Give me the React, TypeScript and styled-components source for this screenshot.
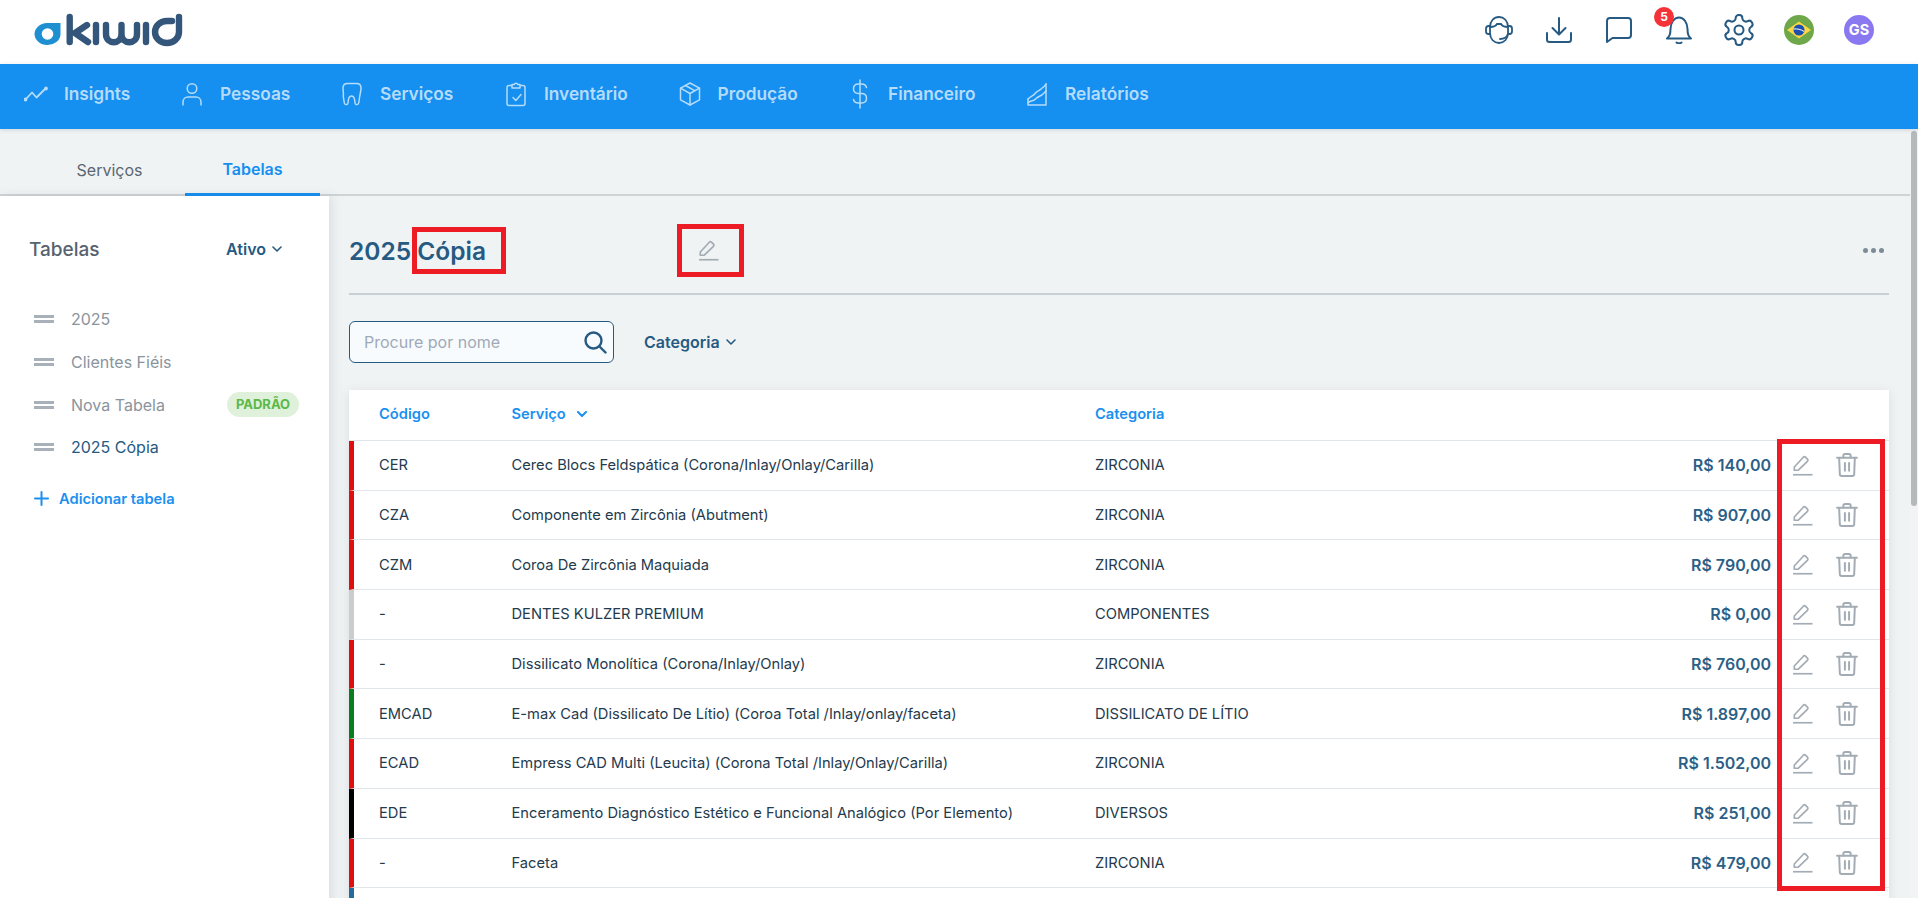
import React from "react";
import styled, { createGlobalStyle } from "styled-components";

const Global = createGlobalStyle`
  html, body { margin: 0; padding: 0; height: 100%; overflow: hidden; }
  body { font-family: Inter, "Noto Sans", sans-serif; background: #f0f3f4; }
  * { box-sizing: border-box; }
  svg { flex: none; display: block; }
`;

const Shell = styled.div`
  height: 898px;
  display: flex;
  flex-direction: column;
  position: relative;
  overflow: hidden;
`;

const TopBar = styled.header`
  height: 64px;
  flex: none;
  background: #fff;
  display: flex;
  align-items: center;
  justify-content: space-between;
  padding: 0 44px 0 34px;
`;

const Logo = styled.svg`
  width: 150px;
  height: 32px;
  margin-top: -4px;
  display: block;
  overflow: visible;
`;

const TopIcons = styled.div`
  display: flex;
  align-items: center;
  gap: 30px;
  margin-top: -4px;
`;

const TopIconBox = styled.div`
  width: 30px;
  height: 30px;
  position: relative;
  display: flex;
  align-items: center;
  justify-content: center;
  color: #265a82;
`;

const Badge = styled.span`
  position: absolute;
  left: -10px;
  top: -8px;
  width: 20px;
  height: 20px;
  border-radius: 50%;
  background: #f53238;
  color: #fff;
  font: 700 12px/20px Inter, sans-serif;
  text-align: center;
`;

const Avatar = styled.div`
  width: 30px;
  height: 30px;
  border-radius: 50%;
  background: #8a78f0;
  color: #fff;
  font: 700 14.5px/30px Inter, sans-serif;
  text-align: center;
`;

const NavBar = styled.nav`
  height: 65px;
  flex: none;
  background: #158ff0;
  display: flex;
  align-items: center;
  padding: 0 0 6px 24px;
  box-shadow: 0 1px 4px rgba(60, 80, 100, 0.18);
  position: relative;
  z-index: 2;
`;

const NavItem = styled.div<{ $w: number }>`
  display: flex;
  align-items: center;
  width: ${(p) => p.$w}px;
  color: #b5dcfb;
  font-size: 17.3px;
  font-weight: 600;
  white-space: nowrap;
`;

const NavIcon = styled.span`
  width: 24px;
  height: 24px;
  margin-right: 16px;
  display: flex;
  align-items: center;
  justify-content: center;
  flex: none;
`;

const Content = styled.div`
  flex: 1;
  min-height: 0;
  display: flex;
`;

const Scroller = styled.div`
  flex: 1;
  min-width: 0;
  overflow: hidden;
`;

const Rail = styled.div`
  width: 8px;
  flex: none;
  padding: 2px 1px 0;
  background: #f1f3f4;
`;

const Thumb = styled.div`
  height: 375px;
  border-radius: 3px;
  background: #b4b9bb;
`;

const TabsRow = styled.div`
  height: 67px;
  display: flex;
  gap: 8px;
  padding-left: 42px;
  border-bottom: 2px solid #ced3d6;
`;

const Tab = styled.div<{ $active?: boolean }>`
  width: 135px;
  height: 67px;
  display: flex;
  align-items: center;
  justify-content: center;
  padding-top: ${(p) => (p.$active ? 15 : 14)}px;
  font-size: 16px;
  font-weight: ${(p) => (p.$active ? 600 : 400)};
  color: ${(p) => (p.$active ? "#158ff0" : "#5b6670")};
  border-bottom: ${(p) => (p.$active ? "3px solid #158ff0" : "none")};
  flex: none;
`;

const Columns = styled.div`
  display: flex;
  align-items: stretch;
`;

const Sidebar = styled.aside`
  width: 329px;
  flex: none;
  min-height: 800px;
  background: #fff;
  box-shadow: 3px 0 10px rgba(60, 80, 90, 0.12);
  padding: 35px 30px 0 34px;
`;

const SideHead = styled.div`
  display: flex;
  align-items: center;
  justify-content: space-between;
  margin-left: -5px;
  height: 36px;
  padding-right: 17px;
`;

const SideTitle = styled.div`
  font-size: 19px;
  font-weight: 500;
  color: #56636f;
`;

const Dropdown = styled.div`
  display: flex;
  align-items: center;
  gap: 6px;
  font-size: 16px;
  font-weight: 600;
  color: #265a82;
`;

const TableList = styled.div`
  margin-top: 31px;
  display: flex;
  flex-direction: column;
`;

const TableRow = styled.div<{ $active?: boolean }>`
  height: 42.7px;
  display: flex;
  align-items: center;
  font-size: 16px;
  color: ${(p) => (p.$active ? "#265a82" : "#8a949c")};
`;

const Grip = styled.span`
  width: 20px;
  height: 8px;
  margin: 0 17px 0 0;
  border-top: 3px solid #a8b1b9;
  border-bottom: 3px solid #a8b1b9;
  flex: none;
`;

const Pill = styled.span`
  margin-left: auto;
  width: 72px;
  height: 25px;
  border-radius: 13px;
  background: #dff1da;
  color: #5bb84a;
  font-size: 13px;
  font-weight: 700;
  line-height: 25px;
  text-align: center;
`;

const AddLink = styled.div`
  display: flex;
  align-items: center;
  gap: 10px;
  margin-top: 21px;
  font-size: 14.7px;
  font-weight: 600;
  color: #1a90f0;
`;

const Main = styled.main`
  flex: 1;
  min-width: 0;
  padding: 0 21px 0 20px;
`;

const TitleRow = styled.div`
  height: 99px;
  display: flex;
  align-items: center;
  border-bottom: 2px solid #c8d0d6;
  padding-top: 12px;
`;

const Title = styled.h1`
  margin: 0;
  width: 349px;
  font-size: 24.5px;
  font-weight: 600;
  color: #265a82;
`;

const TitleEdit = styled.span`
  color: #a3acb4;
  display: flex;
`;

const Dots = styled.div`
  margin-left: auto;
  display: flex;
  gap: 3px;
  margin-right: 5px;
`;

const Dot = styled.span`
  width: 5px;
  height: 5px;
  border-radius: 50%;
  background: #7d8b96;
`;

const Filters = styled.div`
  margin-top: 26px;
  display: flex;
  align-items: center;
  gap: 30px;
`;

const SearchBox = styled.div`
  width: 265px;
  height: 42px;
  border: 1px solid #265a82;
  border-radius: 6px;
  background: #f7fbfd;
  display: flex;
  align-items: center;
  justify-content: space-between;
  padding: 0 6px 0 14px;
  font-size: 16px;
  color: #a0a9b8;
`;

const Card = styled.section`
  margin-top: 27px;
  background: #fff;
  box-shadow: 0 2px 10px rgba(60, 80, 90, 0.12);
`;

const cols = "132.5px 583.5px 1fr 130px 118px";

const HeadRow = styled.div`
  display: grid;
  grid-template-columns: ${cols};
  height: 51px;
  align-items: center;
  padding: 0 0 3px 30px;
  font-size: 14.7px;
  font-weight: 600;
  color: #1a90f0;
  border-bottom: 1px solid #e0e6ea;
`;

const SortLabel = styled.span`
  display: flex;
  align-items: center;
  gap: 11px;
`;

const Row = styled.div<{ $bar: string }>`
  display: grid;
  grid-template-columns: ${cols};
  height: 49.7px;
  align-items: center;
  padding: 0 0 0 25px;
  border-left: 5px solid ${(p) => p.$bar};
  border-bottom: 1px solid #e0e6ea;
  font-size: 14.7px;
  color: #243a4d;
`;

const Price = styled.div`
  text-align: right;
  font-size: 16px;
  font-weight: 600;
  color: #2b5f87;
  white-space: nowrap;
`;

const Actions = styled.div`
  display: flex;
  align-items: center;
  padding-left: 21px;
  gap: 23px;
  color: #a3acb4;
`;

const Mark = styled.div<{ $x: number; $y: number; $w: number; $h: number }>`
  position: absolute;
  left: ${(p) => p.$x}px;
  top: ${(p) => p.$y}px;
  width: ${(p) => p.$w}px;
  height: ${(p) => p.$h}px;
  border: 5px solid #ed1c24;
  pointer-events: none;
  z-index: 5;
`;

const EditIcon = () => (
  <svg width="21" height="21" viewBox="0 0 20 20" fill="none" stroke="currentColor" strokeWidth="1.6" strokeLinejoin="round">
    <path d="M2.2 14.5V11.4L10.8 2.1c.6-.6 1.4-.6 2 0l1.9 1.9c.6.6.6 1.4 0 2L6 14.5H2.2Z" />
    <path d="M1 18.8h18.5" />
  </svg>
);

const TrashIcon = () => (
  <svg width="22" height="24" viewBox="0 0 21 23" fill="none" stroke="currentColor" strokeWidth="1.9" strokeLinecap="round" strokeLinejoin="round">
    <path d="M1 4.6h19" />
    <path d="M7 4.4V2.6C7 1.6 7.6 1 8.6 1h3.8c1 0 1.6.6 1.6 1.6v1.8" />
    <path d="M3 4.8l.6 15.4c0 1 .8 1.8 1.8 1.8h10.2c1 0 1.8-.8 1.8-1.8L18 4.8" />
    <path d="M8.5 9.5v7.5M12.5 9.5v7.5" />
  </svg>
);

const Chevron = ({ w = 10, sw = 1.6 }: { w?: number; sw?: number }) => (
  <svg width={w} height={w * 0.6} viewBox="0 0 10 6" fill="none" stroke="currentColor" strokeWidth={sw} strokeLinecap="round" strokeLinejoin="round">
    <path d="M1 1l4 4 4-4" />
  </svg>
);

const navStroke = { fill: "none", stroke: "#b5dcfb", strokeWidth: 1.5, strokeLinecap: "round" as const, strokeLinejoin: "round" as const };

const navItems: { label: string; w: number; icon: React.ReactNode }[] = [
  { label: "Insights", w: 156, icon: (
    <svg width="24" height="16" viewBox="0 0 24 16" {...navStroke} strokeWidth={1.8}>
      <path d="M1.5 13.5L8 6.5l4.5 5L21.5 2.5" />
      <circle cx="1.5" cy="13.5" r="1" fill="#b5dcfb" /><circle cx="22" cy="2.5" r="1" fill="#b5dcfb" />
    </svg>) },
  { label: "Pessoas", w: 160, icon: (
    <svg width="22" height="24" viewBox="0 0 22 24" {...navStroke}>
      <circle cx="11" cy="6.5" r="4.8" />
      <path d="M2 23v-3c0-3 2.4-5 5-5h8c2.6 0 5 2 5 5v3" />
    </svg>) },
  { label: "Serviços", w: 164, icon: (
    <svg width="20" height="24" viewBox="0 0 20 24" {...navStroke}>
      <path d="M5.500 1.500h9c2.800 0 4.500 2 4.500 4.500 0 3-.8 5.500-1.300 8.500l-1 6.500c-.3 1.800-3 2.200-3.500.5-.4-1.500-.4-3.500-.9-5-.4-1.300-1.400-2.400-2.800-2.400s-2.400 1.100-2.800 2.400c-.5 1.500-.5 3.500-.9 5-.5 1.700-3.200 1.300-3.500-.5l-1-6.500C1.800 11.500 1 9 1 6c0-2.500 1.700-4.500 4.500-4.500Z" />
    </svg>) },
  { label: "Inventário", w: 173.5, icon: (
    <svg width="20" height="26" viewBox="0 0 20 26" {...navStroke}>
      <path d="M5.5 4.5H3C1.8 4.5 1 5.3 1 6.5v16c0 1.2.8 2 2 2h14c1.2 0 2-.8 2-2v-16c0-1.2-.8-2-2-2h-2.5" />
      <path d="M6 3.5h2.2a1.9 1.9 0 0 1 3.6 0H14v3.5H6V3.5Z" />
      <path d="M7 16.5l2.8 3 5.2-6" />
    </svg>) },
  { label: "Produção", w: 170.5, icon: (
    <svg width="22" height="24" viewBox="0 0 22 24" {...navStroke}>
      <path d="M11 1l9.5 5.2v11.6L11 23 1.500 17.800V6.200L11 1Z" />
      <path d="M1.500 6.200L11 11.500l9.500-5.300M11 11.500V23M6.500 3.500l9.500 5.300" />
    </svg>) },
  { label: "Financeiro", w: 177, icon: (
    <svg width="16" height="30" viewBox="0 0 16 30" {...navStroke}>
      <path d="M8 1v28M14.500 8.500C14 6.300 12 5 9.500 5h-3C3.500 5 1.500 7 1.500 9.800s2 4.700 5 4.700h3c3 0 5 2 5 4.800S12.500 24 9.500 24h-3c-2.500 0-4.500-1.300-5-3.500" />
    </svg>) },
  { label: "Relatórios", w: 140, icon: (
    <svg width="20" height="24" viewBox="0 0 20 24" {...navStroke}>
      <path d="M1 17v6h18V2" />
      <path d="M1 17c3-3.500 5-2.500 7-5.500 2-2.500 4-2.500 6-4.500 2-1.500 4-3 5-5" />
      <path d="M1 20.500c4-2.500 6-1 8-4 2-2 5-2.500 7-4.500 1-1 2-2 3-3" />
    </svg>) },
];

const rows: [string, string, string, string, string][] = [
  ["#e10e0e", "CER", "Cerec Blocs Feldspática (Corona/Inlay/Onlay/Carilla)", "ZIRCONIA", "R$ 140,00"],
  ["#e10e0e", "CZA", "Componente em Zircônia (Abutment)", "ZIRCONIA", "R$ 907,00"],
  ["#e10e0e", "CZM", "Coroa De Zircônia Maquiada", "ZIRCONIA", "R$ 790,00"],
  ["#cccccc", "-", "DENTES KULZER PREMIUM", "COMPONENTES", "R$ 0,00"],
  ["#e10e0e", "-", "Dissilicato Monolítica (Corona/Inlay/Onlay)", "ZIRCONIA", "R$ 760,00"],
  ["#0a7d1e", "EMCAD", "E-max Cad (Dissilicato De Lítio) (Coroa Total /Inlay/onlay/faceta)", "DISSILICATO DE LÍTIO", "R$ 1.897,00"],
  ["#e10e0e", "ECAD", "Empress CAD Multi (Leucita) (Corona Total /Inlay/Onlay/Carilla)", "ZIRCONIA", "R$ 1.502,00"],
  ["#000000", "EDE", "Enceramento Diagnóstico Estético e Funcional Analógico (Por Elemento)", "DIVERSOS", "R$ 251,00"],
  ["#e10e0e", "-", "Faceta", "ZIRCONIA", "R$ 479,00"],
];

export default function App() {
  return (
    <Shell>
      <Global />
      <TopBar>
        <Logo viewBox="0 0 150 32" fill="none">
          <path d="M13 9H26.500V20.500A13 11 0 1 1 13 9Z" fill="#1e8fd0" />
          <circle cx="13.500" cy="20" r="5.800" fill="#fff" />
          <g stroke="#34567a" strokeWidth="6.400" strokeLinecap="round" strokeLinejoin="round">
            <path d="M35.700 3v25M53 11L41 19l13 9" />
            <path d="M62 11v17" />
            <path d="M72 11v9c0 11 15.500 11 15.500 0v-9 9c0 11 15.500 11 15.500 0v-9" />
            <path d="M112 11v17" />
            <path d="M145 3V18A12 11 0 1 1 133 7H138" />
          </g>
        </Logo>
        <TopIcons>
          <TopIconBox>
            <svg width="28" height="28" viewBox="0 0 28 28" fill="none" stroke="currentColor" strokeWidth="1.800" strokeLinecap="round">
              <path d="M5 11C5 5 9 1 14 1s9 4 9 10v6c0 6-4 10-9 10s-9-4-9-10v-6Z" />
              <path d="M5 11c4 0 6-1 7-3h4c1 2 3 3 7 3" />
              <path d="M5 10H3.500C2 10 1 11 1 12.500v3C1 17 2 18 3.500 18H5M23 10h1.500c1.500 0 2.500 1 2.500 2.500v3c0 1.500-1 2.500-2.500 2.500H23" />
              <path d="M23 18c-1 3-4 5-8 5" />
            </svg>
          </TopIconBox>
          <TopIconBox>
            <svg width="26" height="26" viewBox="0 0 26 26" fill="none" stroke="currentColor" strokeWidth="2" strokeLinecap="round" strokeLinejoin="round">
              <path d="M13 1v16M6.500 11l6.500 6.500 6.500-6.500" />
              <path d="M1 16v6.500C1 24 2 25 3.500 25h19c1.500 0 2.500-1 2.500-2.500V16" />
            </svg>
          </TopIconBox>
          <TopIconBox>
            <svg width="26" height="26" viewBox="0 0 26 26" fill="none" stroke="currentColor" strokeWidth="2" strokeLinejoin="round">
              <path d="M1 25V4C1 2 2 1 4 1h18c2 0 3 1 3 3v14c0 2-1 3-3 3H6.500L1 25Z" />
            </svg>
          </TopIconBox>
          <TopIconBox>
            <svg width="26" height="28" viewBox="0 0 26 28" fill="none" stroke="currentColor" strokeWidth="2" strokeLinecap="round" strokeLinejoin="round">
              <path d="M1 22.500h24c-2-2-3.500-3-3.500-9.500 0-6-3.500-11.500-8.500-11.500S4.500 7 4.500 13c0 6.500-1.500 7.500-3.500 9.500Z" />
              <path d="M10.500 26.500c1.500 1 3.500 1 5 0" />
            </svg>
            <Badge>5</Badge>
          </TopIconBox>
          <TopIconBox>
            <svg width="36" height="36" viewBox="0 0 24 24" fill="none" stroke="currentColor" strokeWidth="1.350" strokeLinecap="round" strokeLinejoin="round">
              <path d="M12.220 2h-.44a2 2 0 0 0-2 2v.18a2 2 0 0 1-1 1.730l-.43.250a2 2 0 0 1-2 0l-.150-.080a2 2 0 0 0-2.730.730l-.220.380a2 2 0 0 0 .730 2.730l.150.100a2 2 0 0 1 1 1.720v.510a2 2 0 0 1-1 1.740l-.150.090a2 2 0 0 0-.730 2.730l.220.380a2 2 0 0 0 2.730.730l.150-.080a2 2 0 0 1 2 0l.430.250a2 2 0 0 1 1 1.730V20a2 2 0 0 0 2 2h.440a2 2 0 0 0 2-2v-.180a2 2 0 0 1 1-1.730l.430-.250a2 2 0 0 1 2 0l.150.080a2 2 0 0 0 2.730-.730l.220-.390a2 2 0 0 0-.730-2.730l-.150-.080a2 2 0 0 1-1-1.740v-.500a2 2 0 0 1 1-1.740l.150-.090a2 2 0 0 0 .730-2.730l-.220-.380a2 2 0 0 0-2.730-.730l-.150.080a2 2 0 0 1-2 0l-.430-.250a2 2 0 0 1-1-1.730V4a2 2 0 0 0-2-2z" />
              <circle cx="12" cy="12" r="3" />
            </svg>
          </TopIconBox>
          <TopIconBox>
            <svg width="30" height="30" viewBox="0 0 30 30">
              <circle cx="15" cy="15" r="15" fill="#6fa84a" />
              <path d="M3 15L15 6.500 27 15 15 23.500Z" fill="#fcd745" />
              <circle cx="15" cy="15" r="5.500" fill="#1c4fb0" />
              <path d="M9.700 14c3.500-.5 7.500.5 10.400 2.500" stroke="#fff" strokeWidth="1" fill="none" />
            </svg>
          </TopIconBox>
          <Avatar>GS</Avatar>
        </TopIcons>
      </TopBar>

      <NavBar>
        {navItems.map((n) => (
          <NavItem key={n.label} $w={n.w}>
            <NavIcon>{n.icon}</NavIcon>
            {n.label}
          </NavItem>
        ))}
      </NavBar>

      <Content>
        <Scroller>
          <TabsRow>
            <Tab>Serviços</Tab>
            <Tab $active>Tabelas</Tab>
          </TabsRow>
          <Columns>
            <Sidebar>
              <SideHead>
                <SideTitle>Tabelas</SideTitle>
                <Dropdown>Ativo <Chevron /></Dropdown>
              </SideHead>
              <TableList>
                <TableRow><Grip />2025</TableRow>
                <TableRow><Grip />Clientes Fiéis</TableRow>
                <TableRow><Grip />Nova Tabela<Pill>PADRÃO</Pill></TableRow>
                <TableRow $active><Grip />2025 Cópia</TableRow>
              </TableList>
              <AddLink>
                <svg width="15" height="15" viewBox="0 0 15 15" stroke="currentColor" strokeWidth="2" strokeLinecap="round">
                  <path d="M7.500 1v13M1 7.500h13" />
                </svg>
                Adicionar tabela
              </AddLink>
            </Sidebar>
            <Main>
              <TitleRow>
                <Title>2025 Cópia</Title>
                <TitleEdit><EditIcon /></TitleEdit>
                <Dots><Dot /><Dot /><Dot /></Dots>
              </TitleRow>
              <Filters>
                <SearchBox>
                  Procure por nome
                  <svg width="24" height="24" viewBox="0 0 24 24" fill="none" stroke="#265a82" strokeWidth="2.400" strokeLinecap="round">
                    <circle cx="10.500" cy="10.500" r="8" />
                    <path d="M16.500 16.500l6 6" />
                  </svg>
                </SearchBox>
                <Dropdown>Categoria <Chevron /></Dropdown>
              </Filters>
              <Card>
                <HeadRow>
                  <span>Código</span>
                  <SortLabel>Serviço <Chevron sw={2} /></SortLabel>
                  <span>Categoria</span>
                </HeadRow>
                {rows.map((r) => (
                  <Row key={r[2]} $bar={r[0]}>
                    <span>{r[1]}</span>
                    <span>{r[2]}</span>
                    <span>{r[3]}</span>
                    <Price>{r[4]}</Price>
                    <Actions><EditIcon /><TrashIcon /></Actions>
                  </Row>
                ))}
                <Row $bar="#236c9c" />
              </Card>
            </Main>
          </Columns>
        </Scroller>
        <Rail><Thumb /></Rail>
      </Content>

      <Mark $x={412} $y={227} $w={94} $h={47} />
      <Mark $x={677} $y={224} $w={67} $h={53} />
      <Mark $x={1777} $y={439} $w={108} $h={452} />
    </Shell>
  );
}
